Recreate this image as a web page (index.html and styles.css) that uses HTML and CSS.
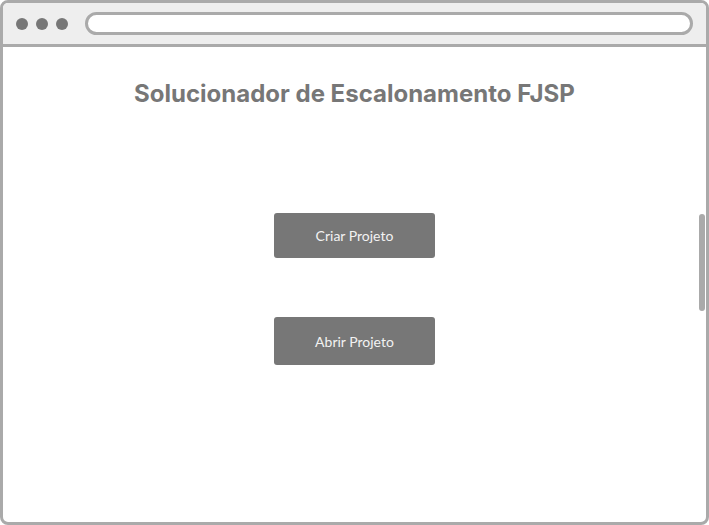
FILE: index.html
```html
<!DOCTYPE html>
<html lang="pt">
<head>
<meta charset="utf-8">
<title>Solucionador de Escalonamento FJSP</title>
<link rel="stylesheet" href="styles.css">
</head>
<body>
<div class="frame">
  <div class="chrome">
    <div class="dots">
      <span class="dot"></span>
      <span class="dot"></span>
      <span class="dot"></span>
    </div>
    <div class="url"></div>
  </div>
  <div class="page">
    <h1 class="title">Solucionador de Escalonamento FJSP</h1>
    <div class="actions">
      <button class="btn btn-create">Criar Projeto</button>
      <button class="btn btn-open">Abrir Projeto</button>
    </div>
    <div class="scrollbar"></div>
  </div>
</div>
</body>
</html>
```

FILE: styles.css
```css
html, body {
  margin: 0;
  padding: 0;
  background: #fff;
}

.frame {
  width: 709px;
  height: 525px;
  box-sizing: border-box;
  border: 3px solid #aaa;
  border-radius: 8px;
  overflow: hidden;
  display: flex;
  flex-direction: column;
  background: #fff;
}

.chrome {
  height: 41px;
  flex: none;
  background: #eee;
  border-bottom: 3px solid #aaa;
  display: flex;
  align-items: center;
  padding: 0 13px 0 13px;
}

.dots {
  display: flex;
  gap: 8px;
}

.dot {
  width: 12px;
  height: 12px;
  border-radius: 50%;
  background: #777;
}

.url {
  margin-left: 17px;
  flex: 1;
  height: 17px;
  border: 3px solid #aaa;
  border-radius: 12px;
  background: #fff;
}

.page {
  flex: 1;
  position: relative;
  display: flex;
  flex-direction: column;
  align-items: center;
  padding-top: 32px;
}

.title {
  margin: 0;
  font-family: Inter, "Liberation Sans", sans-serif;
  font-weight: 700;
  font-size: 24px;
  line-height: 29px;
  color: #777;
}

.actions {
  margin-top: 105px;
  display: flex;
  flex-direction: column;
  align-items: center;
  gap: 59px;
}

.btn {
  width: 161px;
  border: none;
  border-radius: 3px;
  background: #777;
  color: #f2f2f2;
  font-family: Lato, "Noto Sans", sans-serif;
  font-size: 14px;
  padding: 0;
  cursor: pointer;
}

.btn-create {
  height: 45px;
}

.btn-open {
  height: 48px;
}

.scrollbar {
  position: absolute;
  right: 1px;
  top: 167px;
  width: 6px;
  height: 97px;
  border-radius: 3px;
  background: #aaa;
}
```
